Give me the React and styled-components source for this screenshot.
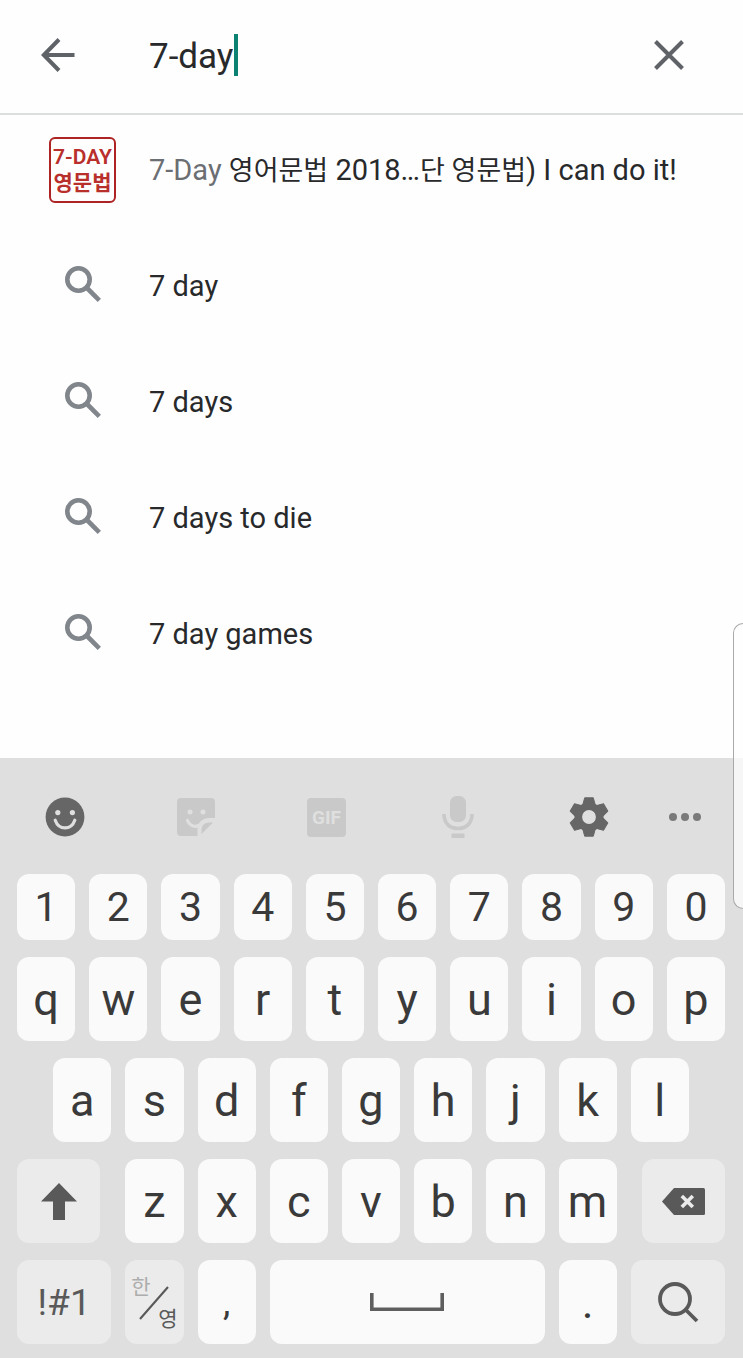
import React, { useState } from "react";
import styled, { createGlobalStyle, css } from "styled-components";

const DIGITS = ['1', '2', '3', '4', '5', '6', '7', '8', '9', '0'];
const TOP_ROW = ['q', 'w', 'e', 'r', 't', 'y', 'u', 'i', 'o', 'p'];
const HOME_ROW = ['a', 's', 'd', 'f', 'g', 'h', 'j', 'k', 'l'];
const BOTTOM_ROW = ['z', 'x', 'c', 'v', 'b', 'n', 'm'];

const SUGGESTIONS = ['7 day', '7 days', '7 days to die', '7 day games'];

const GlobalStyle = createGlobalStyle`
    * { box-sizing: border-box; }

    body {
        margin: 0;
        background: #fefefe;
        font-family: Roboto, "Noto Sans CJK KR", sans-serif;
        color: #28292b;
    }

    button, input { font-family: inherit; }
`;

const Page = styled.div`
    min-height: 100vh;
    display: flex;
    flex-direction: column;
`;

const SearchBar = styled.header`
    display: flex;
    align-items: center;
    height: 115px;
    padding: 0 52px 4px 36px;
    border-bottom: 2px solid #dcdddd;
`;

const IconButton = styled.button`
    display: flex;
    align-items: center;
    justify-content: center;
    width: 44px;
    height: 44px;
    padding: 0;
    border: 0;
    background: none;
    color: #5f6368;
`;

const SearchField = styled.label`
    flex: 1;
    display: flex;
    align-items: center;
    gap: 1px;
    min-width: 0;
    margin-left: 69px;
`;

const SearchInput = styled.input`
    field-sizing: content;
    min-width: 0;
    padding: 4px 0 0;
    border: 0;
    outline: 0;
    background: none;
    color: #28292b;
    font-size: 35px;
    line-height: 44px;
    caret-color: transparent;
`;

const Caret = styled.span`
    width: 4px;
    height: 42px;
    background: #0b8272;
`;

const SuggestionList = styled.ul`
    flex: 1;
    display: flex;
    flex-direction: column;
    gap: 48px;
    margin: 0;
    padding: 21px 48px 48px 49px;
    list-style: none;
`;

const Suggestion = styled.a`
    display: flex;
    align-items: center;
    gap: 33px;
    height: 68px;
    color: #28292b;
    font-size: 29px;
    line-height: 36px;
    text-decoration: none;
    white-space: nowrap;

    .typed { color: #6b6e72; }
    .hangul { font-size: 27px; }
`;

const SuggestionIcon = styled.span`
    flex: none;
    display: flex;
    justify-content: center;
    width: 67px;
    padding-bottom: 4px;
    color: #80868b;
`;

const AppIcon = styled.span`
    display: flex;
    flex-direction: column;
    align-items: center;
    justify-content: center;
    width: 67px;
    height: 66px;
    border: 2px solid #ae2424;
    border-radius: 6px;
    color: #b92f2c;
    font-size: 21px;
    font-weight: 600;
    line-height: 26px;
`;

const Keyboard = styled.section`
    display: flex;
    flex-direction: column;
    gap: 17px;
    padding: 0 18px 14px 17px;
    background: #dfdfdf;
`;

const Toolbar = styled.div`
    display: flex;
    height: 116px;
    padding-top: 2px;
    margin: 0 10px -17px -18px;
`;

const ToolButton = styled.button(({ $grow, $muted }) => css`
    flex: ${$grow || 131} 1 0;
    display: flex;
    align-items: center;
    justify-content: center;
    padding: 0;
    border: 0;
    background: none;
    color: ${$muted ? '#c9c9c9' : '#666666'};
`);

const KeyRow = styled.div`
    display: grid;
    grid-template-columns: repeat(20, minmax(0, 1fr));
    column-gap: 14px;
    grid-auto-rows: ${({ $short }) => ($short ? '66px' : '84px')};
`;

const Key = styled.button(({ $span, $start, $special, $size }) => css`
    grid-column: ${$start || 'auto'} / span ${$span || 2};
    display: flex;
    align-items: center;
    justify-content: center;
    padding: 0;
    border: 0;
    border-radius: 12px;
    background: ${$special ? '#ebebeb' : '#fafafa'};
    color: ${$special ? '#595959' : '#3a3a3a'};
    font-size: ${$size || 45}px;
`);

const ShiftKey = styled(Key)`
    margin-right: 11px;
`;

const BackspaceKey = styled(Key)`
    margin-left: 11px;
`;

const LanguageKey = styled(Key)`
    display: grid;
    grid-template: 54px / 1fr;
    align-content: center;
    padding: 2px 6px 0;
    font-size: 21px;
    line-height: 22px;

    > * { grid-area: 1 / 1; }
    .off { place-self: start; color: #adadad; }
    .slash { place-self: center; }
    .on { place-self: end; }
`;

const EdgeHandle = styled.div`
    position: fixed;
    right: 0;
    bottom: 449px;
    width: 10px;
    height: 286px;
    border: 1px solid #a9a9a9;
    border-right: 0;
    border-radius: 12px 0 0 12px;
    background: rgba(253, 253, 253, 0.75);
`;

const BackIcon = () => (
    <svg width="34" height="34" viewBox="0 0 34 34" fill="none" stroke="currentColor" strokeWidth="4">
        <path d="M33.5 17H3M18 1.500L2.800 17l15.200 15.500" />
    </svg>
);

const CloseIcon = () => (
    <svg width="30" height="30" viewBox="0 0 30 30" fill="none" stroke="currentColor" strokeWidth="4">
        <path d="M1.500 1.500l27 27M28.500 1.500l-27 27" />
    </svg>
);

const SearchIcon = () => (
    <svg width="36" height="36" viewBox="0 0 36 36" fill="none" stroke="currentColor" strokeWidth="4.600">
        <circle cx="13.500" cy="13.500" r="11.200" />
        <path d="M21.500 21.500L34.300 34.300" />
    </svg>
);

const SmileIcon = () => (
    <svg width="40" height="40" viewBox="0 0 40 40">
        <circle cx="20" cy="20" r="19.4" fill="currentColor" />
        <circle cx="12.8" cy="15.6" r="2.6" fill="#dfdfdf" />
        <circle cx="27.4" cy="15.6" r="2.6" fill="#dfdfdf" />
        <path d="M10.2 23.2c1.800 5 5.300 7.700 9.800 7.700s8-2.700 9.800-7.700" fill="none" stroke="#dfdfdf" strokeWidth="3.2" strokeLinecap="round" />
    </svg>
);

const StickerIcon = () => (
    <svg width="38" height="38" viewBox="0 0 38 38">
        <path d="M4 0h30a4 4 0 0 1 4 4v16h-6C25 20 20.500 25 20.500 31v7H4a4 4 0 0 1-4-4V4a4 4 0 0 1 4-4z" fill="currentColor" />
        <path d="M36 24.500L24.500 36v-4c0-4.500 3-7.500 7.500-7.500z" fill="currentColor" />
        <circle cx="13" cy="14" r="2.500" fill="#dfdfdf" />
        <circle cx="26" cy="14" r="2.500" fill="#dfdfdf" />
        <path d="M10.500 22.500c2.500 6 8 7 12.500 4.500" fill="none" stroke="#dfdfdf" strokeWidth="3.200" strokeLinecap="round" />
    </svg>
);

const GifIcon = () => (
    <svg width="39" height="39" viewBox="0 0 39 39">
        <rect width="39" height="39" rx="4" fill="currentColor" />
        <text x="19.500" y="26" textAnchor="middle" fill="#dfdfdf" fontSize="19" fontWeight="700">GIF</text>
    </svg>
);

const MicIcon = () => (
    <svg width="32" height="42" viewBox="0 0 32 42">
        <rect x="8" y="0" width="16" height="26" rx="6.500" fill="currentColor" />
        <path d="M2 18c0 9 5.500 14.500 14 14.500S30 27 30 18" fill="none" stroke="currentColor" strokeWidth="3.600" />
        <rect x="9.500" y="37.500" width="13" height="4.500" fill="currentColor" />
    </svg>
);

const GearIcon = () => (
    <svg width="42" height="42" viewBox="-21 -21 42 42" fill="currentColor" stroke="currentColor" strokeLinejoin="round">
        {[0, 60, 120, 180, 240, 300].map(angle => (
            <path key={angle} d="M-4.300-19.200h8.600L6.500-11h-13z" transform={`rotate(${angle})`} />
        ))}
        <circle r="10.700" fill="none" strokeWidth="7.600" />
    </svg>
);

const MoreIcon = () => (
    <svg width="32" height="8" viewBox="0 0 32 8" fill="#7a7a7a">
        <circle cx="4" cy="4" r="4" />
        <circle cx="16" cy="4" r="4" />
        <circle cx="28" cy="4" r="4" />
    </svg>
);

const ShiftIcon = () => (
    <svg width="36" height="37" viewBox="0 0 36 37" fill="currentColor">
        <path d="M18 0l18 18.500H24V37H12V18.500H0z" />
    </svg>
);

const BackspaceIcon = () => (
    <svg width="43" height="27" viewBox="0 0 43 27">
        <path d="M12 0h29.500a1.500 1.500 0 0 1 1.500 1.500v24a1.500 1.500 0 0 1-1.500 1.500H12L0 13.500z" fill="currentColor" />
        <path d="M19.800 8l11 11M30.800 8l-11 11" stroke="#ebebeb" strokeWidth="3.600" />
    </svg>
);

const SpaceIcon = () => (
    <svg width="74" height="18" viewBox="0 0 74 18" fill="none" stroke="#5e5e5e" strokeWidth="3.600">
        <path d="M1.800 0v16.200h70.400V0" />
    </svg>
);

const SearchKeyIcon = () => (
    <svg width="42" height="42" viewBox="0 0 42 42" fill="none" stroke="currentColor" strokeWidth="3.800">
        <circle cx="18" cy="18" r="15" />
        <path d="M28.500 28.500L40 40" />
    </svg>
);

const SlashIcon = () => (
    <svg className="slash" width="30" height="34" viewBox="0 0 30 34" stroke="currentColor" strokeWidth="2">
        <path d="M1 33L29 1" />
    </svg>
);

const LetterKeys = ({ letters, size, start, onType }) => letters.map((letter, index) => (
    <Key
        key={letter}
        type="button"
        $size={size}
        $start={index === 0 ? start : undefined}
        onClick={() => onType(letter)}
    >
        {letter}
    </Key>
));

const App = () => {
    const [query, setQuery] = useState('7-day');

    const type = character => setQuery(query + character);

    return (
        <Page>
            <GlobalStyle />
            <SearchBar>
                <IconButton type="button" aria-label="Back"><BackIcon /></IconButton>
                <SearchField>
                    <SearchInput
                        type="text"
                        aria-label="Search"
                        value={query}
                        onChange={e => setQuery(e.currentTarget.value)}
                    />
                    <Caret />
                </SearchField>
                <IconButton type="button" aria-label="Clear" onClick={() => setQuery('')}><CloseIcon /></IconButton>
            </SearchBar>

            <SuggestionList>
                <li>
                    <Suggestion href="#app">
                        <AppIcon>
                            <span>7-DAY</span>
                            <span>영문법</span>
                        </AppIcon>
                        <span>
                            <span className="typed">7-Day</span> <span className="hangul">영어문법</span> 2018…
                            <span className="hangul">단 영문법</span>) I can do it!
                        </span>
                    </Suggestion>
                </li>
                {SUGGESTIONS.map(text => (
                    <li key={text}>
                        <Suggestion href="#search">
                            <SuggestionIcon><SearchIcon /></SuggestionIcon>
                            <span>{text}</span>
                        </Suggestion>
                    </li>
                ))}
            </SuggestionList>

            <Keyboard>
                <Toolbar>
                    <ToolButton type="button" aria-label="Emoji"><SmileIcon /></ToolButton>
                    <ToolButton type="button" aria-label="Stickers" $muted><StickerIcon /></ToolButton>
                    <ToolButton type="button" aria-label="GIF" $muted><GifIcon /></ToolButton>
                    <ToolButton type="button" aria-label="Voice input" $muted><MicIcon /></ToolButton>
                    <ToolButton type="button" aria-label="Settings"><GearIcon /></ToolButton>
                    <ToolButton type="button" aria-label="More" $grow={60}><MoreIcon /></ToolButton>
                </Toolbar>
                <KeyRow $short>
                    <LetterKeys letters={DIGITS} size={41} onType={type} />
                </KeyRow>
                <KeyRow>
                    <LetterKeys letters={TOP_ROW} onType={type} />
                </KeyRow>
                <KeyRow>
                    <LetterKeys letters={HOME_ROW} start={2} onType={type} />
                </KeyRow>
                <KeyRow>
                    <ShiftKey type="button" aria-label="Shift" $span={3} $special><ShiftIcon /></ShiftKey>
                    <LetterKeys letters={BOTTOM_ROW} onType={type} />
                    <BackspaceKey
                        type="button"
                        aria-label="Backspace"
                        $span={3}
                        $special
                        onClick={() => setQuery(query.slice(0, -1))}
                    >
                        <BackspaceIcon />
                    </BackspaceKey>
                </KeyRow>
                <KeyRow>
                    <Key type="button" $span={3} $size={37} $special>!#1</Key>
                    <LanguageKey type="button" $special>
                        <span className="off">한</span>
                        <SlashIcon />
                        <span className="on">영</span>
                    </LanguageKey>
                    <Key type="button" $size={37} onClick={() => type(',')}>,</Key>
                    <Key type="button" aria-label="Space" $span={8} onClick={() => type(' ')}><SpaceIcon /></Key>
                    <Key type="button" onClick={() => type('.')}>.</Key>
                    <Key type="button" aria-label="Search" $span={3} $special><SearchKeyIcon /></Key>
                </KeyRow>
            </Keyboard>
            <EdgeHandle />
        </Page>
    );
}

export default App;
